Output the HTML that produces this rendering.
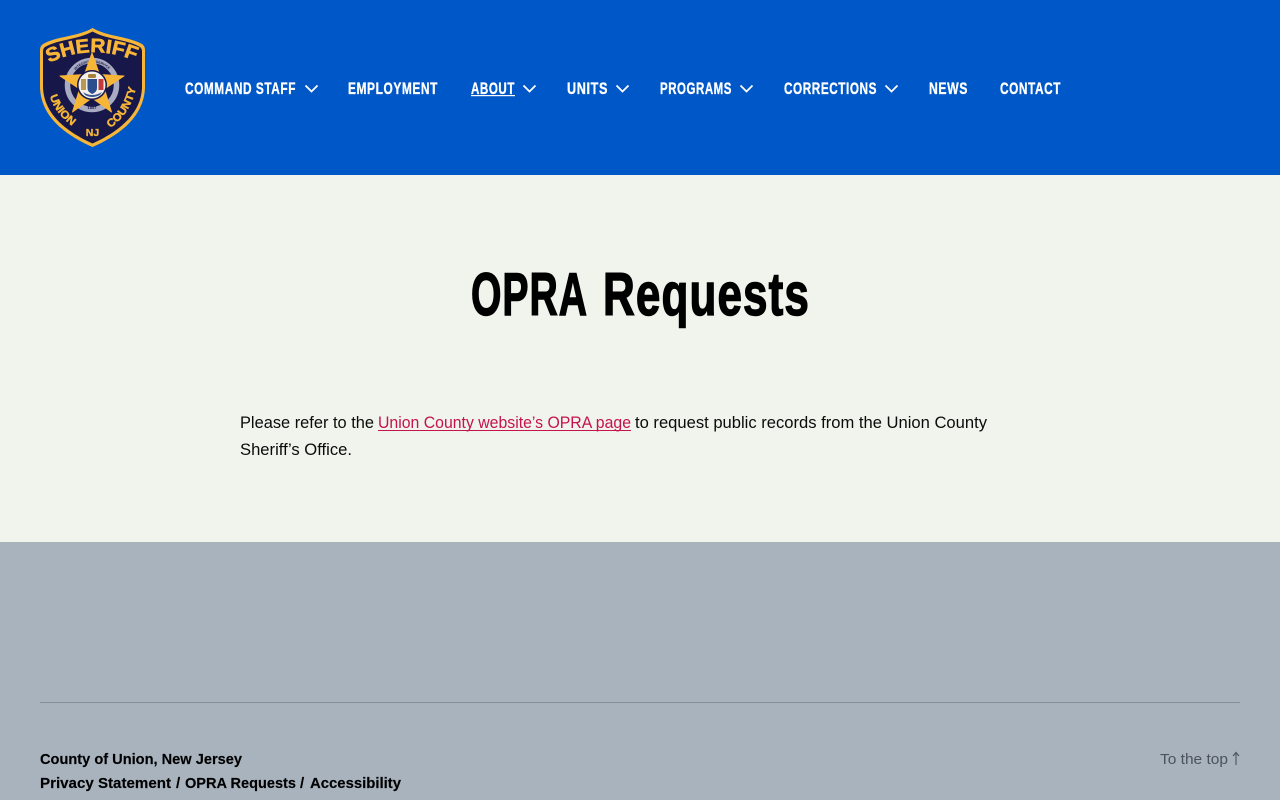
<!DOCTYPE html>
<html lang="en">
<head>
<meta charset="utf-8">
<title>OPRA Requests – Union County Sheriff</title>
<style>
html,body{margin:0;padding:0;width:1280px;height:800px;overflow:hidden;background:#f1f4ec;font-family:"Liberation Sans",sans-serif}
svg{position:absolute;left:0;top:0;display:block}
</style>
</head>
<body>
<svg width="1280" height="800" viewBox="0 0 1280 800" xmlns="http://www.w3.org/2000/svg" font-family="'Liberation Sans',sans-serif">
<defs>
<path id="p-sheriff" d="M49 63 Q92 42 138 62"/>
<path id="p-union" d="M50 96 Q54 112 72 126"/>
<path id="p-county" d="M110 128 Q130 115 136 88"/>
<path id="p-ring-top" d="M70 85 A22.5 22.5 0 0 1 115 85"/>
</defs>

<rect x="0" y="0" width="1280" height="175" fill="#0057c8"/>
<rect x="0" y="175" width="1280" height="367" fill="#f1f4ec"/>
<rect x="0" y="542" width="1280" height="258" fill="#a8b3be"/>

<!-- logo -->
<path d="M92.5 28 C108 37 128 36 142 44 Q145 46 145 50 L145 86 C145 116 120 135 92.5 147 C65 135 40 116 40 86 L40 50 Q40 46 43 44 C57 36 77 37 92.5 28 Z" fill="#f7b637"/>
<path d="M92.5 31.5 C108 40 126 39 140 47 Q142 48.5 142 51.5 L142 86 C142 114 118 132 92.5 143.5 C67 132 43 114 43 86 L43 51.5 Q43 48.5 45 47 C59 39 77 40 92.5 31.5 Z" fill="#17174a"/>
<text font-size="19.5" font-weight="700" fill="#f7b637" stroke="#f7b637" stroke-width=".6"><textPath href="#p-sheriff" textLength="89" lengthAdjust="spacingAndGlyphs">SHERIFF</textPath></text>
<text font-size="11" font-weight="700" fill="#f7b637" stroke="#f7b637" stroke-width=".4"><textPath href="#p-union" textLength="38" lengthAdjust="spacingAndGlyphs">UNION</textPath></text>
<text font-size="11" font-weight="700" fill="#f7b637" stroke="#f7b637" stroke-width=".4"><textPath href="#p-county" textLength="49" lengthAdjust="spacingAndGlyphs">COUNTY</textPath></text>
<text x="92.5" y="136" font-size="10.5" font-weight="700" fill="#f7b637" stroke="#f7b637" stroke-width=".3" text-anchor="middle">NJ</text>
<circle cx="92" cy="85" r="24.5" fill="none" stroke="#a9abc2" stroke-width="5.5"/>
<text font-size="3.4" font-weight="700" fill="#17174a"><textPath href="#p-ring-top" startOffset="16">INTEGRITY &amp; SERVICE</textPath></text>
<polygon points="92,53 99.6,74.5 124,76 104.4,89 111.5,112 92,98 72.5,112 79.6,89 60,76 84.4,74.5" fill="#f7b637" stroke="#f7b637" stroke-width="1" stroke-linejoin="round"/>
<circle cx="92" cy="85" r="15" fill="#17174a"/>
<circle cx="92" cy="85" r="13.5" fill="#f5f1ea"/>
<path d="M87.5 79 H97 V88 Q97 92 92.2 94 Q87.5 92 87.5 88 Z" fill="#2c4d8e"/>
<rect x="88" y="74" width="8" height="4" rx="1.5" fill="#a5813c"/>
<path d="M81 79 h5 v11 h-5 Z" fill="#b79a52"/>
<path d="M98.5 79 h5 v11 h-5 Z" fill="#c23a3e"/>
<path d="M83 92 Q92 98 102 92 L100 95 Q92 99 85 95 Z" fill="#3a5a96"/>
<text x="92" y="109" font-size="4" font-weight="700" fill="#17174a" text-anchor="middle">1857</text>

<!-- nav -->
<g font-size="16.5" font-weight="700" fill="#fff" stroke="#fff" stroke-width=".35" letter-spacing=".8">
<a href="#"><text x="185" y="94" textLength="111" lengthAdjust="spacingAndGlyphs">COMMAND STAFF</text></a>
<a href="#"><text x="348" y="94" textLength="90" lengthAdjust="spacingAndGlyphs">EMPLOYMENT</text></a>
<a href="#"><text x="471" y="94" textLength="44" lengthAdjust="spacingAndGlyphs">ABOUT</text></a>
<a href="#"><text x="567" y="94" textLength="41" lengthAdjust="spacingAndGlyphs">UNITS</text></a>
<a href="#"><text x="660" y="94" textLength="72" lengthAdjust="spacingAndGlyphs">PROGRAMS</text></a>
<a href="#"><text x="784" y="94" textLength="93" lengthAdjust="spacingAndGlyphs">CORRECTIONS</text></a>
<a href="#"><text x="929" y="94" textLength="39" lengthAdjust="spacingAndGlyphs">NEWS</text></a>
<a href="#"><text x="1000" y="94" textLength="61" lengthAdjust="spacingAndGlyphs">CONTACT</text></a>
</g>
<rect x="471" y="95" width="44" height="1.2" fill="#fff"/>
<g fill="none" stroke="#fff" stroke-width="1.8">
<path d="M305.5 85.5 L311.5 91.5 L317.5 85.5"/>
<path d="M523.5 85.5 L529.5 91.5 L535.5 85.5"/>
<path d="M616.5 85.5 L622.5 91.5 L628.5 85.5"/>
<path d="M740.5 85.5 L746.5 91.5 L752.5 85.5"/>
<path d="M885.5 85.5 L891.5 91.5 L897.5 85.5"/>
</g>

<!-- title -->
<g font-size="60" font-weight="700" fill="#000" stroke="#000" stroke-width="1.4" letter-spacing="1.5">
<text x="471" y="315" textLength="117" lengthAdjust="spacingAndGlyphs">OPRA</text>
<text x="603" y="315" textLength="207" lengthAdjust="spacingAndGlyphs">Requests</text>
</g>

<!-- body -->
<g font-size="17" fill="#0b0b0b">
<text x="240" y="428" textLength="134" lengthAdjust="spacingAndGlyphs">Please refer to the</text>
<a href="#"><text x="378" y="428" fill="#c4134f" textLength="253" lengthAdjust="spacingAndGlyphs">Union County website’s OPRA page</text></a>
<text x="635" y="428" textLength="352" lengthAdjust="spacingAndGlyphs">to request public records from the Union County</text>
<text x="240" y="455" textLength="112" lengthAdjust="spacingAndGlyphs">Sheriff’s Office.</text>
</g>
<rect x="378" y="430" width="253" height="1" fill="#c4134f"/>

<!-- footer -->
<rect x="40" y="702" width="1200" height="1" fill="#858d99"/>
<g font-size="15" font-weight="700" fill="#000" stroke="#000" stroke-width=".15">
<text x="40" y="764" textLength="202" lengthAdjust="spacingAndGlyphs">County of Union, New Jersey</text>
<a href="#"><text x="40" y="788" textLength="131" lengthAdjust="spacingAndGlyphs">Privacy Statement</text></a>
<text x="176" y="788">/</text>
<a href="#"><text x="185" y="788" textLength="111" lengthAdjust="spacingAndGlyphs">OPRA Requests</text></a>
<text x="300" y="788">/</text>
<a href="#"><text x="310" y="788" textLength="91" lengthAdjust="spacingAndGlyphs">Accessibility</text></a>
</g>
<a href="#"><text x="1160" y="764" font-size="15" fill="#4b525c" textLength="68" lengthAdjust="spacingAndGlyphs">To the top</text></a>
<path d="M1236 765 V753 M1233 756 L1236 752.5 L1239 756" fill="none" stroke="#4b525c" stroke-width="1.1"/>
</svg>
</body>
</html>
